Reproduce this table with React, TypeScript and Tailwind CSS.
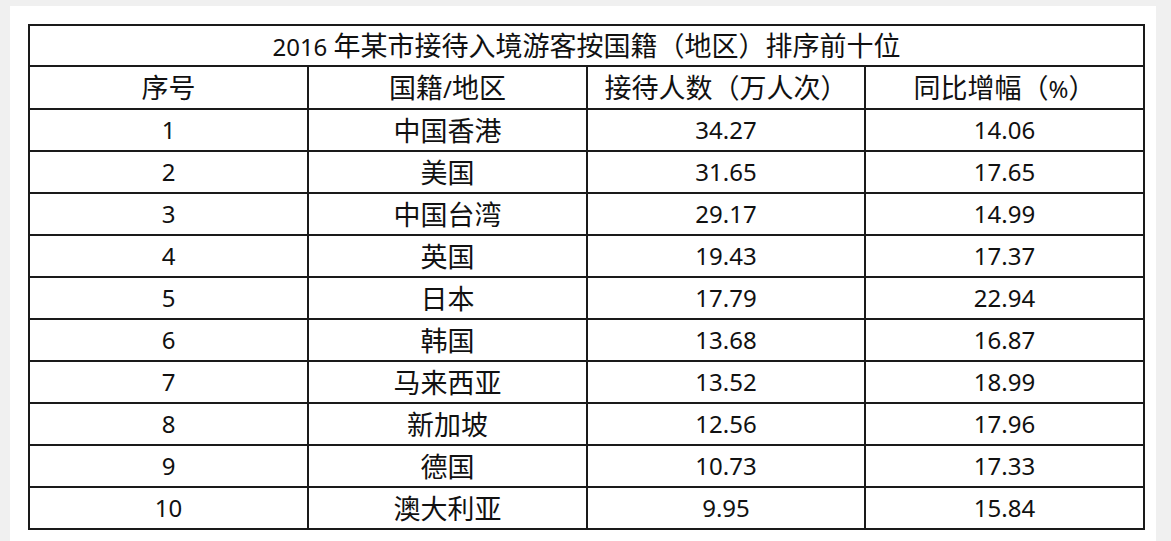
import React from 'react';

const rows: [string, string, string, string][] = [
  ['1', '中国香港', '34.27', '14.06'],
  ['2', '美国', '31.65', '17.65'],
  ['3', '中国台湾', '29.17', '14.99'],
  ['4', '英国', '19.43', '17.37'],
  ['5', '日本', '17.79', '22.94'],
  ['6', '韩国', '13.68', '16.87'],
  ['7', '马来西亚', '13.52', '18.99'],
  ['8', '新加坡', '12.56', '17.96'],
  ['9', '德国', '10.73', '17.33'],
  ['10', '澳大利亚', '9.95', '15.84'],
];

const cell = 'border-2 border-[#1a1a1a] text-center p-0 leading-none';

// CJK glyphs in the source render a bit larger than the digits
const Txt: React.FC<{ v: string }> = ({ v }) => {
  const parts = v.split(/([\u3000-\u9fff\uff00-\uffef]+)/).filter(Boolean);
  return (
    <>
      {parts.map((p, i) =>
        /[\u3000-\u9fff\uff00-\uffef]/.test(p) ? (
          <span key={i} className="text-[27px]">
            {p}
          </span>
        ) : (
          <span key={i}>{p}</span>
        )
      )}
    </>
  );
};

const App: React.FC = () => {
  return (
    <div
      className="w-[1171px] h-[541px] bg-[#f0f0f0] pt-[6px] pl-[10px] overflow-hidden"
      style={{ fontFamily: '"Noto Sans", "Noto Sans CJK SC", sans-serif' }}
    >
      <div className="w-[1146px] h-[540px] bg-white pt-[18px] pl-[18px]">
        <table className="table-fixed border-collapse w-[1117px] text-[24px] text-[#111]">
          <colgroup>
            <col className="w-[279px]" />
            <col className="w-[279px]" />
            <col className="w-[278px]" />
            <col className="w-[279px]" />
          </colgroup>
          <tbody>
            <tr className="h-[41px]">
              <td colSpan={4} className={cell}>
                <Txt v="2016 年某市接待入境游客按国籍（地区）排序前十位" />
              </td>
            </tr>
            <tr className="h-[43px]">
              <td className={cell}><Txt v="序号" /></td>
              <td className={cell}><Txt v="国籍/地区" /></td>
              <td className={cell}><Txt v="接待人数（万人次）" /></td>
              <td className={cell}><Txt v="同比增幅（%）" /></td>
            </tr>
            {rows.map((r) => (
              <tr key={r[0]} className="h-[42px]">
                {r.map((v, i) => (
                  <td key={i} className={cell}>
                    <Txt v={v} />
                  </td>
                ))}
              </tr>
            ))}
          </tbody>
        </table>
      </div>
    </div>
  );
};

export default App;
